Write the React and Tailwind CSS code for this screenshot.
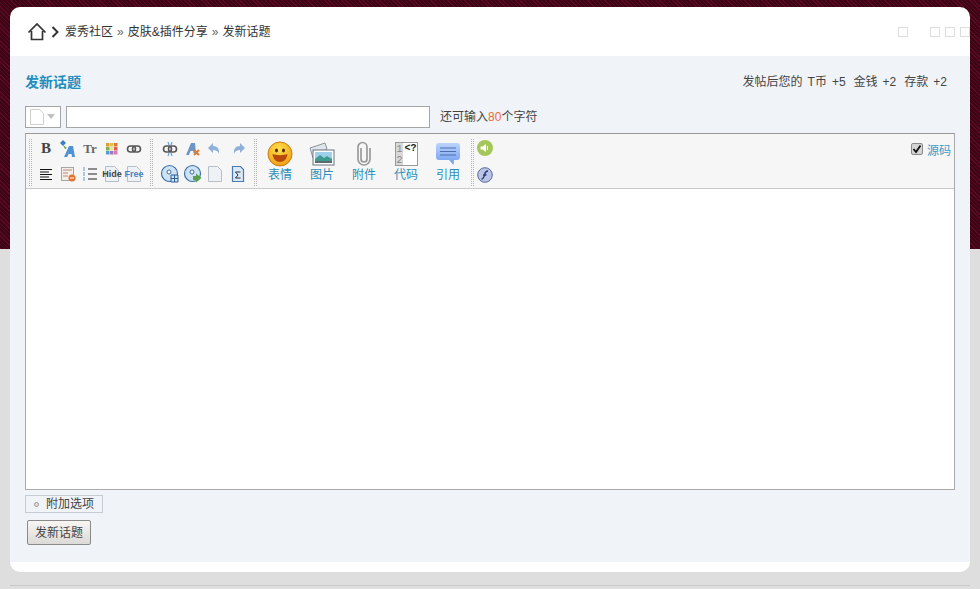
import React from 'react';

// small toolbar icons, drawn on a 20x20 box
const Ico = ({ children }) => (
    <svg width="20" height="20" viewBox="0 0 20 20" fill="none">{children}</svg>
);

const Letter = ({ className, children }) => (
    <span className={`flex w-5 h-5 items-center justify-center font-['Liberation_Serif',serif] font-bold ${className}`}>{children}</span>
);

const Fmt = () => (
    <Ico>
        <path d="M2 4l3-3 3 3-3 3z" fill="#3f7fc0" />
        <path d="M5 6l4 3-2 1z" fill="#58a04a" />
        <path d="M6 18l5-11h4l2 11h-3l-.4-3h-3l-1.400 3z" fill="#4f93d6" />
    </Ico>
);

const Palette = () => (
    <Ico>
        {[
            [4, 4, '#d9a03a'], [8, 4, '#e2c24a'], [12, 4, '#d9783a'],
            [4, 8, '#7ab04e'], [8, 8, '#e8e0a0'], [12, 8, '#d95a5a'],
            [4, 12, '#5a9ad6'], [8, 12, '#9a7ac6'], [12, 12, '#d97ab0'],
        ].map(([x, y, c]) => <rect key={x + '-' + y} x={x} y={y} width="3.500" height="3.500" fill={c} />)}
    </Ico>
);

const Chain = ({ broken }) => (
    <Ico>
        <rect x="3.500" y="7" width="8" height="6" rx="3" stroke="#555" strokeWidth="1.600" />
        <rect x="8.500" y="7" width="8" height="6" rx="3" stroke="#555" strokeWidth="1.600" />
        {broken && <path d="M8 3l1 3M12 3l-1 3M8 17l1-3M12 17l-1-3" stroke="#6aa0d8" strokeWidth="1.200" />}
    </Ico>
);

const ClearFmt = () => (
    <Ico>
        <path d="M3 16L8 4h4l1 10h-2.500l-.2-2H7.500l-1.600 4z" fill="#6b96c8" />
        <path d="M11 11l5 5M16 11l-5 5" stroke="#e07a3a" strokeWidth="2" />
    </Ico>
);

const Arrow = ({ flip }) => (
    <Ico>
        <path
            d="M8 4L3 9l5 5v-3c3 0 5 1 6 4 .6-5-1.500-8-6-8z"
            fill="#8fb0d8"
            transform={flip ? 'matrix(-1 0 0 1 20 0)' : undefined}
        />
    </Ico>
);

const AlignLeft = () => (
    <Ico>
        <path d="M4 5.500h12M4 8h9M4 10.500h12M4 13h9M4 15.500h12" stroke="#111" strokeWidth="1.200" />
    </Ico>
);

const Form = () => (
    <Ico>
        <rect x="3.500" y="3.500" width="12" height="13" fill="#f3efe6" stroke="#a5a5a5" />
        <path d="M5 6h9M5 9h5M5 12h5" stroke="#b88" />
        <circle cx="14" cy="14" r="3.500" fill="#e8702a" />
        <path d="M12 14h4" stroke="#fff" />
    </Ico>
);

const OrderedList = () => (
    <Ico>
        <path d="M3 4h2M3 6h2M3 9h2M3 11h2M3 14h2M3 16h2" stroke="#6a94c8" />
        <path d="M8 5h9M8 10h9M8 15h9" stroke="#222" strokeWidth="1.200" />
    </Ico>
);

const Sheet = ({ children }) => (
    <Ico>
        <path d="M3.500 2.500h9l4 4v11h-13z" fill="#eef1f5" stroke="#b8bec6" />
        {children}
    </Ico>
);

const Disc = ({ badge }) => (
    <Ico>
        <circle cx="9.500" cy="9.500" r="8" fill="#cfe2f5" stroke="#3a6ea8" strokeWidth="1.200" />
        <circle cx="9" cy="8" r="2" fill="#fff" stroke="#3a6ea8" />
        {badge === 'grid' ? (
            <path d="M11 11h7v7h-7zM14.500 11v7M11 14.500h7" fill="#cfe2f5" stroke="#2f5f95" />
        ) : (
            <path d="M10 12h3v-2.500l5.500 4.500-5.500 4.500V16h-3z" fill="#58a04a" />
        )}
    </Ico>
);

const Sigma = () => (
    <Ico>
        <path d="M4.500 2.500h8l3 3v12h-11z" fill="#dce8f6" stroke="#4a7ab0" strokeWidth="1.200" />
        <path d="M12.500 8H7.500l2.500 3-2.500 3h5" stroke="#234" />
    </Ico>
);

const Smiley = () => (
    <svg width="26" height="26" viewBox="0 0 26 26">
        <defs>
            <radialGradient id="sm" cx="45%" cy="30%" r="75%">
                <stop offset="0" stopColor="#ffe14d" />
                <stop offset="1" stopColor="#ef9a12" />
            </radialGradient>
        </defs>
        <circle cx="13" cy="13" r="12" fill="url(#sm)" stroke="#c97a10" />
        <ellipse cx="9.500" cy="9.500" rx="1.500" ry="2" fill="#5a3208" />
        <ellipse cx="16.500" cy="9.500" rx="1.500" ry="2" fill="#5a3208" />
        <path d="M5.500 13c4 1.500 11 1.500 15 0-.5 5-3.500 8-7.500 8s-7-3-7.500-8z" fill="#b8480c" />
    </svg>
);

const Photo = () => (
    <svg width="26" height="26" viewBox="0 0 26 26">
        <path d="M1 7l15-5 2 6-14 9z" fill="#dfe5ea" stroke="#8a949c" />
        <rect x="4" y="9" width="21" height="15" fill="#fff" stroke="#69757e" />
        <rect x="6" y="11" width="17" height="9" fill="#9fd0ea" />
        <path d="M6 18l5-4 4 3 3-2 5 3v2H6z" fill="#3f9a8e" />
        <rect x="6" y="20" width="17" height="2" fill="#5a6a72" />
    </svg>
);

const Clip = () => (
    <svg width="26" height="26" viewBox="0 0 26 26" fill="none">
        <path
            d="M19 7v11a6 6 0 0 1-12 0V6a4.500 4.500 0 0 1 9 0v12a3 3 0 0 1-6 0V7"
            stroke="#9a9a9a"
            strokeWidth="1.700"
        />
    </svg>
);

const CodeIcon = () => (
    <div className="flex h-[24px] w-[23px] border border-[#9a9a9a] bg-white font-['Liberation_Mono',monospace] text-[10px] leading-[11px]">
        <div className="flex w-[8px] flex-col items-center bg-[#d8d8d8] pt-[1px] text-[#888]">
            <span>1</span>
            <span>2</span>
        </div>
        <span className="pl-[1px] font-bold text-[#222]">&lt;?</span>
    </div>
);

const Quote = () => (
    <svg width="26" height="26" viewBox="0 0 26 26" fill="none">
        <defs>
            <linearGradient id="qt" x1="0" y1="0" x2="0" y2="1">
                <stop offset="0" stopColor="#bcd4fb" />
                <stop offset="1" stopColor="#6f9cf0" />
            </linearGradient>
        </defs>
        <path d="M4 2h18a3 3 0 0 1 3 3v11a3 3 0 0 1-3 3h-3l-.5 5-4.500-5H4a3 3 0 0 1-3-3V5a3 3 0 0 1 3-3z" fill="url(#qt)" />
        <path d="M5 7h16M5 10.500h16M5 14h16" stroke="#4d6fb0" />
    </svg>
);

const Sound = () => (
    <svg width="16" height="16" viewBox="0 0 16 16">
        <circle cx="8" cy="8" r="8" fill="#a4c65a" />
        <path d="M3.500 6.500h2L9 4v8l-3.500-2.500h-2z" fill="#fff" />
        <path d="M10.500 6v4" stroke="#fff" />
    </svg>
);

const Flash = () => (
    <svg width="16" height="16" viewBox="0 0 16 16" fill="none">
        <circle cx="8" cy="8" r="7.300" fill="#b9c4e6" stroke="#5a6a9a" />
        <path d="M11 4C8 4 8 6 7.500 8S6.500 12 4.500 12M6 8h3.500" stroke="#2d3c78" strokeWidth="1.300" />
    </svg>
);

const Separator = () => (
    <div className="mx-[1px] w-[3px] self-stretch border-x border-dotted border-[#b5b5b5]" />
);

const BigButton = ({ icon, label }) => (
    <div className="flex w-[42px] flex-col items-center pt-[2px]">
        <div className="flex h-[26px] items-center justify-center">{icon}</div>
        <span className="text-xs leading-4 text-[#2b8fb8]">{label}</span>
    </div>
);

const PageLabel = ({ children }) => (
    <foreignObject x="-3" y="5" width="26" height="12">
        {children}
    </foreignObject>
);

const row1 = [
    <Letter key="b" className="text-[15px] text-[#444]">B</Letter>,
    <Fmt key="fmt" />,
    <Letter key="tr" className="text-[13px] text-[#666]">Tr</Letter>,
    <Palette key="palette" />,
    <Chain key="link" />,
];

const row2 = [
    <AlignLeft key="align" />,
    <Form key="form" />,
    <OrderedList key="list" />,
    <Sheet key="hide">
        <PageLabel>
            <div className="text-center font-['Liberation_Sans',sans-serif] text-[9px] leading-[11px] font-bold text-[#444]">Hide</div>
        </PageLabel>
    </Sheet>,
    <Sheet key="free">
        <PageLabel>
            <div className="text-center font-['Liberation_Sans',sans-serif] text-[9px] leading-[11px] font-bold text-[#4a7fc0]">Free</div>
        </PageLabel>
    </Sheet>,
];

const row3 = [<Chain key="unlink" broken />, <ClearFmt key="clear" />, <Arrow key="undo" />, <Arrow key="redo" flip />];
const row4 = [<Disc key="d1" badge="grid" />, <Disc key="d2" badge="arrow" />, <Sheet key="blank" />, <Sigma key="sigma" />];

const IconGrid = ({ cols, items }) => (
    <div className={`grid ${cols} grid-rows-[20px_20px] content-start gap-y-[5px]`}>
        {items.map((item, i) => (
            <div key={i} className="flex h-5 items-center justify-center">{item}</div>
        ))}
    </div>
);

const App = () => {
    return (
        <div className="h-[589px] overflow-hidden bg-[#dedede] bg-[repeating-linear-gradient(45deg,#5a0a22_0px,#5a0a22_1px,#3d0416_1px,#3d0416_3px)] bg-[length:100%_249px] bg-no-repeat px-[10px] pt-[7px] font-['Liberation_Sans','Noto_Sans_CJK_SC',sans-serif] text-xs text-[#444]">
            <div className="overflow-hidden rounded-[10px] bg-white pb-[10px]">
                {/* breadcrumb */}
                <div className="flex h-[49px] items-center pl-[17px]">
                    <svg width="20" height="20" viewBox="0 0 20 20" fill="none">
                        <path d="M1.500 10.500L10 2l8.500 8.500M4.500 9v8.500h11V9" stroke="#333" strokeWidth="1.700" />
                    </svg>
                    <svg className="ml-[4px]" width="8" height="12" viewBox="0 0 8 12" fill="none">
                        <path d="M1.500 1l5 5-5 5" stroke="#333" strokeWidth="2" />
                    </svg>
                    <span className="ml-[6px] text-[#333]">爱秀社区</span>
                    <span className="mx-[4px] text-[#666]">»</span>
                    <span className="text-[#333]">皮肤&amp;插件分享</span>
                    <span className="mx-[4px] text-[#666]">»</span>
                    <span className="text-[#333]">发新话题</span>
                    <div className="ml-auto flex gap-[5px]">
                        <div className="mr-[17px] h-[10px] w-[10px] border border-[#dddddd]" />
                        <div className="h-[10px] w-[10px] border border-[#dddddd]" />
                        <div className="h-[10px] w-[10px] border border-[#dddddd]" />
                        <div className="h-[10px] w-[10px] border border-[#dddddd]" />
                    </div>
                </div>

                <div className="h-[506px] bg-[#f0f3f8] px-[15px] pt-[17px]">
                    <div className="flex h-[18px] items-center justify-between pr-[8px]">
                        <h2 className="text-sm font-bold text-[#1e8fbe]">发新话题</h2>
                        <div className="flex gap-[8px] text-[#444]">
                            <span className="-mr-[3px]">发帖后您的</span>
                            <span className="flex gap-[5px]"><span>T币</span><span>+5</span></span>
                            <span className="flex gap-[5px]"><span>金钱</span><span>+2</span></span>
                            <span className="flex gap-[5px]"><span>存款</span><span>+2</span></span>
                        </div>
                    </div>

                    {/* subject */}
                    <div className="mt-[14px] flex h-[23px] items-center">
                        <div className="flex h-[22px] w-[36px] items-center gap-[3px] border border-[#a5a5a5] bg-white pl-[4px]">
                            <svg width="14" height="16" viewBox="0 0 14 16" fill="none">
                                <path d="M.500.500h9l4 4v11H.500z" fill="#fff" stroke="#cfcfcf" />
                            </svg>
                            <svg width="8" height="5" viewBox="0 0 8 5">
                                <path d="M0 0h8L4 5z" fill="#c0c0c0" />
                            </svg>
                        </div>
                        <div className="ml-[5px] h-[22px] w-[364px] border border-[#a5a5a5] bg-white" />
                        <span className="ml-[10px]">
                            还可输入<span className="text-[#f26c30]">80</span>个字符
                        </span>
                    </div>

                    {/* editor */}
                    <div className="mt-[5px] h-[357px] w-[930px] border border-[#a9a9a9] border-t-[#999999] bg-white">
                        <div className="flex h-[55px] border-b border-[#c8c8c8] bg-[#f6f6f6] pl-[2px] pt-[5px] pb-[2px]">
                            <Separator />
                            <div className="w-[2px]" />
                            <IconGrid cols="grid-cols-[repeat(5,22px)]" items={[...row1, ...row2]} />
                            <div className="w-[4px]" />
                            <Separator />
                            <div className="w-[5px]" />
                            <IconGrid cols="grid-cols-[repeat(4,22.500px)]" items={[...row3, ...row4]} />
                            <div className="w-[4px]" />
                            <Separator />
                            <div className="flex pl-[1px] pr-[1px]">
                                <BigButton icon={<Smiley />} label="表情" />
                                <BigButton icon={<Photo />} label="图片" />
                                <BigButton icon={<Clip />} label="附件" />
                                <BigButton icon={<CodeIcon />} label="代码" />
                                <BigButton icon={<Quote />} label="引用" />
                            </div>
                            <Separator />
                            <div className="flex flex-col gap-[11px] pl-[2px] pt-[1px]">
                                <Sound />
                                <Flash />
                            </div>
                            <div className="ml-auto flex items-start pr-[3px] pt-[4px]">
                                <span className="flex h-[12px] w-[12px] items-center justify-center rounded-[2px] border border-[#8a8a8a] bg-[#d4d4d4]">
                                    <svg width="10" height="10" viewBox="0 0 10 10" fill="none">
                                        <path d="M1.500 5l2.500 3 4.500-6.500" stroke="#111" strokeWidth="1.800" />
                                    </svg>
                                </span>
                                <span className="ml-[4px] text-[#3a9ac8]">源码</span>
                            </div>
                        </div>
                    </div>

                    <div className="mt-[5px] flex h-[18px] w-[78px] items-center border border-[#c6ccd4] pl-[8px] text-[#444]">
                        <span className="h-[5px] w-[5px] rounded-full border border-[#999] bg-[#ddd]" />
                        <span className="ml-[7px]">附加选项</span>
                    </div>

                    <button className="ml-[2px] mt-[7px] h-[25px] w-[64px] rounded-[2px] border border-[#8a8a8a] bg-gradient-to-b from-[#f8f6f2] to-[#dcdad6] text-[#444]">
                        发新话题
                    </button>
                </div>
            </div>
            <div className="mt-[13px] border-t border-[#c8c8c8]" />
        </div>
    );
};

export default App;
